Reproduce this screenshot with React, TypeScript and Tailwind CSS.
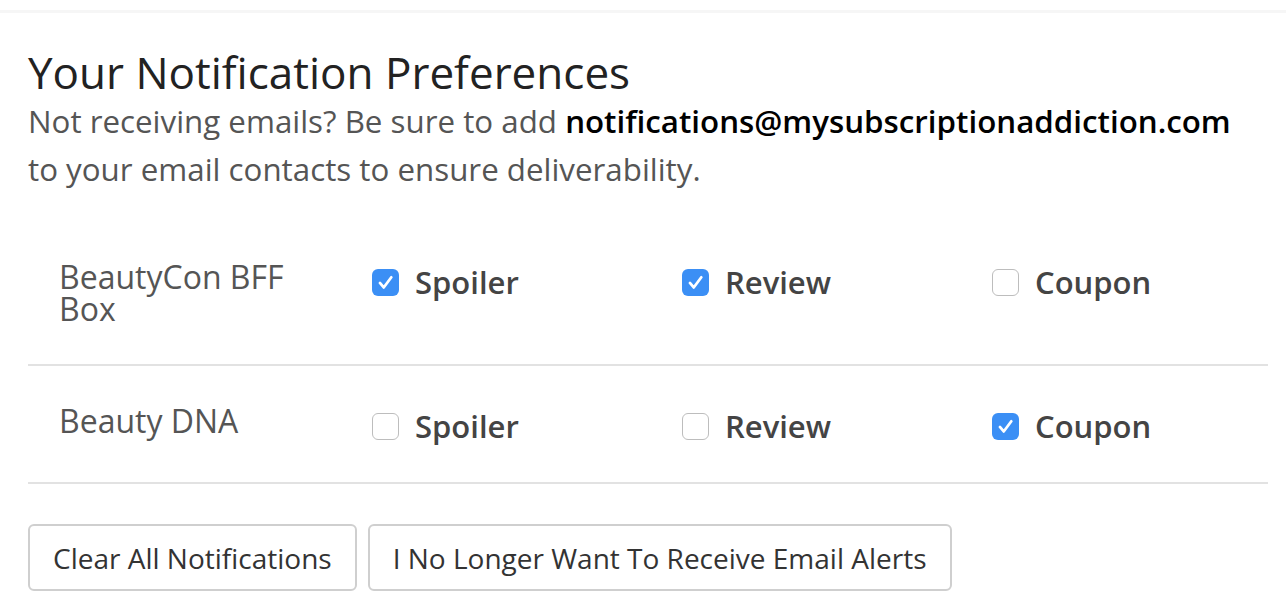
import { useState } from 'react';

type Prefs = { spoiler: boolean; review: boolean; coupon: boolean };

interface Box {
  name: string;
  prefs: Prefs;
}

const initialBoxes: Box[] = [
  { name: 'BeautyCon BFF Box', prefs: { spoiler: true, review: true, coupon: false } },
  { name: 'Beauty DNA', prefs: { spoiler: false, review: false, coupon: true } },
];

function Checkbox({ checked, onChange, label }: { checked: boolean; onChange: () => void; label: string }) {
  return (
    <label className="flex items-center gap-[16px] h-[42px] cursor-pointer select-none">
      <input type="checkbox" className="sr-only" checked={checked} onChange={onChange} />
      {checked ? (
        <span className="w-[27px] h-[27px] shrink-0 rounded-[6px] bg-[#3b8ff5] flex items-center justify-center">
          <svg width="19" height="19" viewBox="0 0 16 16" fill="none">
            <path d="M3.3 8.4 L6.5 12.2 L12.9 3.6" stroke="white" strokeWidth="2.3" strokeLinecap="round" strokeLinejoin="round" />
          </svg>
        </span>
      ) : (
        <span className="w-[27px] h-[27px] shrink-0 rounded-[6px] bg-white border border-[#bdbdbd]" />
      )}
      <span className="text-[31px] font-semibold text-[#444]">{label}</span>
    </label>
  );
}

export default function App() {
  const [boxes, setBoxes] = useState<Box[]>(initialBoxes);

  const toggle = (i: number, key: keyof Prefs) => {
    setBoxes((prev) =>
      prev.map((b, idx) => (idx === i ? { ...b, prefs: { ...b.prefs, [key]: !b.prefs[key] } } : b))
    );
  };

  const clearAll = () => {
    setBoxes((prev) => prev.map((b) => ({ ...b, prefs: { spoiler: false, review: false, coupon: false } })));
  };

  return (
    <div className="min-h-screen bg-white font-['Open_Sans',sans-serif]">
      <div className="h-[10px]" />
      <div className="h-[3px] bg-[#f6f6f6]" />
      <div className="px-[28px] pt-[35px]">
        <h1 className="text-[44px] leading-[49px] text-[#222]">Your Notification Preferences</h1>
        <p className="text-[31.3px] leading-[48px] text-[#555]">
          Not receiving emails? Be sure to add{' '}
          <strong className="font-semibold text-black">notifications@mysubscriptionaddiction.com</strong> to your email
          contacts to ensure deliverability.
        </p>

        <div className="mt-[29px] w-[1240px]">
          {boxes.map((box, i) => (
            <div key={box.name} className="grid grid-cols-4 border-b-2 border-[#e2e2e2] pt-[39px] pb-[35px]">
              <div className="pl-[31px] pr-[20px] pb-[4px] text-[32px] leading-[32px] text-[#555]">{box.name}</div>
              <div className="pl-[34px]">
                <Checkbox checked={box.prefs.spoiler} onChange={() => toggle(i, 'spoiler')} label="Spoiler" />
              </div>
              <div className="pl-[34px]">
                <Checkbox checked={box.prefs.review} onChange={() => toggle(i, 'review')} label="Review" />
              </div>
              <div className="pl-[34px]">
                <Checkbox checked={box.prefs.coupon} onChange={() => toggle(i, 'coupon')} label="Coupon" />
              </div>
            </div>
          ))}
        </div>

        <div className="mt-[40px] flex gap-[11px]">
          <button
            onClick={clearAll}
            className="h-[67px] px-[23px] border-2 border-[#cfcfcf] rounded-[6px] bg-white text-[28px] text-[#333]"
          >
            Clear All Notifications
          </button>
          <button className="h-[67px] px-[23px] border-2 border-[#cfcfcf] rounded-[6px] bg-white text-[28px] text-[#333]">
            I No Longer Want To Receive Email Alerts
          </button>
        </div>
      </div>
    </div>
  );
}
